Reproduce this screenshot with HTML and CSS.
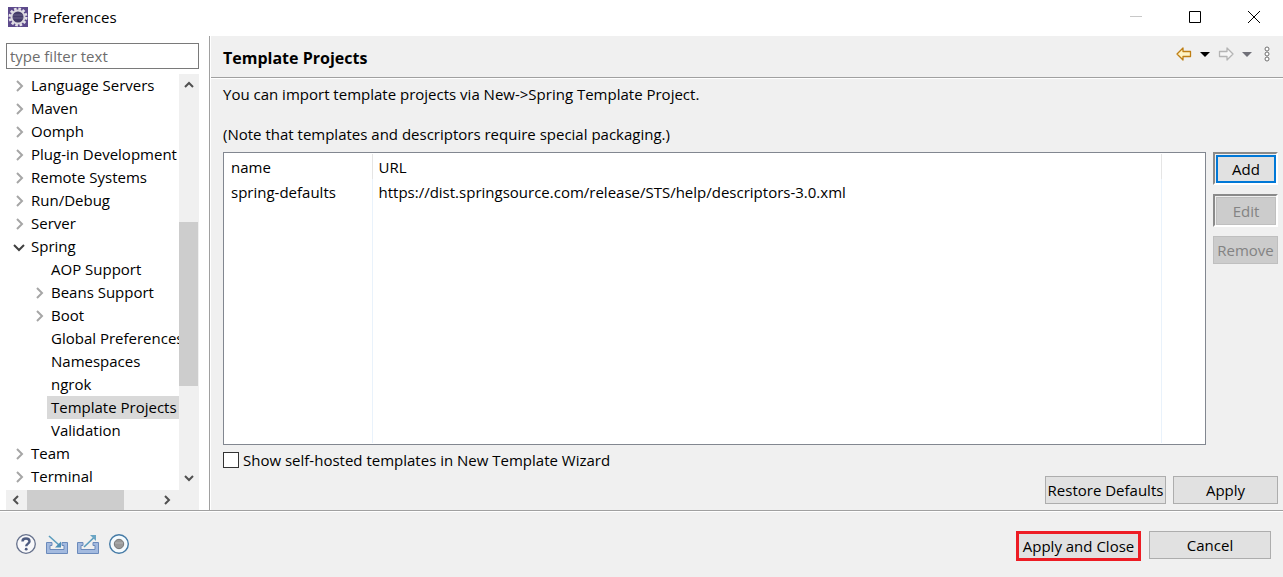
FILE: index.html
```
<!DOCTYPE html>
<html lang="en">
<head>
    <meta charset="UTF-8">
    <title>Preferences</title>
    <link rel="stylesheet" href="styles.css">
</head>
<body>
<svg class="defs" width="0" height="0">
    <symbol id="closed" viewBox="0 0 12 12"><path d="M4 1l5 5-5 5" fill="none" stroke="#a6a6a6" stroke-width="2"/></symbol>
    <symbol id="open" viewBox="0 0 12 12"><path d="M1 4l5 5 5-5" fill="none" stroke="#404040" stroke-width="2"/></symbol>
    <symbol id="arrow-up" viewBox="0 0 12 12"><path d="M2 8l4-4 4 4" fill="none" stroke="#505050" stroke-width="2"/></symbol>
    <symbol id="arrow-down" viewBox="0 0 12 12"><path d="M2 4l4 4 4-4" fill="none" stroke="#505050" stroke-width="2"/></symbol>
    <symbol id="arrow-left" viewBox="0 0 12 12"><path d="M9 2L5 6l4 4" fill="none" stroke="#505050" stroke-width="2"/></symbol>
    <symbol id="arrow-right" viewBox="0 0 12 12"><path d="M3 2l4 4-4 4" fill="none" stroke="#505050" stroke-width="2"/></symbol>
</svg>

<div class="titlebar">
    <svg class="logo" width="20" height="20" viewBox="0 0 20 20">
        <rect width="20" height="20" fill="#5d4a8c"/>
        <circle cx="10" cy="10" r="8" fill="none" stroke="#e4e1e8" stroke-width="3" stroke-dasharray="2.5 1.7"/>
        <circle cx="10" cy="10" r="6.5" fill="#443c68" stroke="#dcd9df" stroke-width="2"/>
        <path d="M5 8h10M5 11h10" stroke="#6a6289"/>
    </svg>
    <h1>Preferences</h1>
    <div class="window-buttons">
        <button type="button" aria-label="Minimize"><svg width="14" height="14"><path d="M1 6.500h12" stroke="#c8c8c8"/></svg></button>
        <button type="button" aria-label="Maximize"><svg width="14" height="14"><path d="M1.500 1.500h11v11h-11z" fill="none" stroke="#000"/></svg></button>
        <button type="button" aria-label="Close"><svg width="14" height="14"><path d="M1 1l12 12M13 1L1 13" stroke="#000"/></svg></button>
    </div>
</div>

<div class="content">
    <div class="sidebar">
        <input class="filter" type="text" placeholder="type filter text" aria-label="type filter text">
        <div class="tree-box">
            <ul class="tree">
                <li><div class="row"><button type="button" class="toggle" aria-label="Expand"><svg><use href="#closed"/></svg></button><span class="label">Language Servers</span></div></li>
                <li><div class="row"><button type="button" class="toggle" aria-label="Expand"><svg><use href="#closed"/></svg></button><span class="label">Maven</span></div></li>
                <li><div class="row"><button type="button" class="toggle" aria-label="Expand"><svg><use href="#closed"/></svg></button><span class="label">Oomph</span></div></li>
                <li><div class="row"><button type="button" class="toggle" aria-label="Expand"><svg><use href="#closed"/></svg></button><span class="label">Plug-in Development</span></div></li>
                <li><div class="row"><button type="button" class="toggle" aria-label="Expand"><svg><use href="#closed"/></svg></button><span class="label">Remote Systems</span></div></li>
                <li><div class="row"><button type="button" class="toggle" aria-label="Expand"><svg><use href="#closed"/></svg></button><span class="label">Run/Debug</span></div></li>
                <li><div class="row"><button type="button" class="toggle" aria-label="Expand"><svg><use href="#closed"/></svg></button><span class="label">Server</span></div></li>
                <li>
                    <div class="row"><button type="button" class="toggle" aria-label="Collapse"><svg><use href="#open"/></svg></button><span class="label">Spring</span></div>
                    <ul>
                        <li><div class="row leaf"><span class="label">AOP Support</span></div></li>
                        <li><div class="row"><button type="button" class="toggle" aria-label="Expand"><svg><use href="#closed"/></svg></button><span class="label">Beans Support</span></div></li>
                        <li><div class="row"><button type="button" class="toggle" aria-label="Expand"><svg><use href="#closed"/></svg></button><span class="label">Boot</span></div></li>
                        <li><div class="row leaf"><span class="label">Global Preferences</span></div></li>
                        <li><div class="row leaf"><span class="label">Namespaces</span></div></li>
                        <li><div class="row leaf"><span class="label">ngrok</span></div></li>
                        <li><div class="row leaf"><span class="label current">Template Projects</span></div></li>
                        <li><div class="row leaf"><span class="label">Validation</span></div></li>
                    </ul>
                </li>
                <li><div class="row"><button type="button" class="toggle" aria-label="Expand"><svg><use href="#closed"/></svg></button><span class="label">Team</span></div></li>
                <li><div class="row"><button type="button" class="toggle" aria-label="Expand"><svg><use href="#closed"/></svg></button><span class="label">Terminal</span></div></li>
            </ul>
            <div class="scroll-v">
                <svg><use href="#arrow-up"/></svg>
                <div class="track"><div class="thumb"></div></div>
                <svg><use href="#arrow-down"/></svg>
            </div>
            <div class="scroll-h">
                <svg><use href="#arrow-left"/></svg>
                <div class="track"><div class="thumb"></div></div>
                <svg><use href="#arrow-right"/></svg>
            </div>
        </div>
    </div>

    <div class="page">
        <div class="page-header">
            <h2>Template Projects</h2>
            <div class="nav">
                <button type="button" aria-label="Back"><svg width="16" height="14" viewBox="0 0 16 14"><path d="M1 7L7 1V4.500h7.500v5H7V13z" fill="#fff3c4" stroke="#bf7f14" stroke-width="1.300" stroke-linejoin="round"/></svg></button>
                <button type="button" aria-label="Back history"><svg width="10" height="5"><path d="M0 0h10L5 5z" fill="#000"/></svg></button>
                <button type="button" aria-label="Forward"><svg width="16" height="14" viewBox="0 0 16 14"><path d="M15 7L9 1V4.500H1.500v5H9V13z" fill="#f6f6f6" stroke="#b4b4b4" stroke-width="1.300" stroke-linejoin="round"/></svg></button>
                <button type="button" aria-label="Forward history"><svg width="10" height="5"><path d="M0 0h10L5 5z" fill="#707078"/></svg></button>
                <button type="button" class="menu" aria-label="Menu"><svg width="6" height="16"><g fill="#fff" stroke="#707070"><circle cx="3" cy="3" r="2"/><circle cx="3" cy="8" r="2"/><circle cx="3" cy="13" r="2"/></g></svg></button>
            </div>
        </div>
        <div class="page-body">
            <p>You can import template projects via New-&gt;Spring Template Project.</p>
            <p>(Note that templates and descriptors require special packaging.)</p>
            <div class="list">
                <div class="table-box">
                    <table>
                        <thead>
                            <tr><th class="col-name">name</th><th>URL</th><th class="col-rest"></th></tr>
                        </thead>
                        <tbody>
                            <tr><td>spring-defaults</td><td>https://dist.springsource.com/release/STS/help/descriptors-3.0.xml</td><td></td></tr>
                            <tr class="fill"><td></td><td></td><td></td></tr>
                        </tbody>
                    </table>
                </div>
                <div class="actions">
                    <div class="sunken"><button type="button" class="btn focus">Add</button></div>
                    <div class="sunken"><button type="button" class="btn" disabled>Edit</button></div>
                    <button type="button" class="btn" disabled>Remove</button>
                </div>
            </div>
            <label class="check"><input type="checkbox">Show self-hosted templates in New Template Wizard</label>
            <div class="page-buttons">
                <button type="button" class="btn restore">Restore Defaults</button>
                <button type="button" class="btn apply">Apply</button>
            </div>
        </div>
    </div>
</div>

<div class="footer">
    <div class="tools">
        <button type="button" aria-label="Help"><svg width="22" height="22" viewBox="0 0 22 22"><circle cx="11" cy="11" r="9.300" fill="#f8f8fa" stroke="#66718c" stroke-width="1.300"/><path d="M7.500 8.500C7.500 4.500 14.500 4.500 14.500 8.500C14.500 10.500 11.200 10.800 11.200 13.300" fill="none" stroke="#4d5b80" stroke-width="2.400"/><circle cx="11.200" cy="16.200" r="1.400" fill="#4d5b80"/></svg></button>
        <button type="button" aria-label="Import"><svg width="22" height="22" viewBox="0 0 22 22"><path d="M6 9.500H.500v11h21v-11H16v3h2v4H4v-4h2z" fill="#a3badf" stroke="#6b8abb"/><path d="M3 3l10 9" stroke="#5a9cbd" stroke-width="1.600"/><path d="M15 8.500v6H9z" fill="#4c8fb6"/></svg></button>
        <button type="button" aria-label="Export"><svg width="22" height="22" viewBox="0 0 22 22"><path d="M6 9.500H.500v11h21v-11H16v3h2v4H4v-4h2z" fill="#a3badf" stroke="#6b8abb"/><path d="M7 14L17.500 4" stroke="#5a9cbd" stroke-width="1.600"/><path d="M13 2h6v6z" fill="#6aa5c4"/></svg></button>
        <button type="button" aria-label="Record"><svg width="22" height="22" viewBox="0 0 22 22"><circle cx="11" cy="11" r="9.300" fill="#f5fbfe" stroke="#447aa5" stroke-width="1.400"/><circle cx="11" cy="11" r="4.700" fill="#999" stroke="#777"/><path d="M7 10h8" stroke="#b5b5b5"/></svg></button>
    </div>
    <button type="button" class="btn primary">Apply and Close</button>
    <button type="button" class="btn cancel">Cancel</button>
</div>
</body>
</html>
```
FILE: styles.css
```
* {
    box-sizing: border-box;
    margin: 0;
    padding: 0;
}
body {
    display: flex;
    flex-direction: column;
    min-height: 100vh;
    background: #f0f0f0;
    color: #000;
    font: 15px/20px "Open Sans", "Noto Sans", sans-serif;
}
button, input {
    font: inherit;
    color: inherit;
}
button {
    border: 0;
    background: none;
}
svg {
    display: block;
}
.defs {
    position: absolute;
}

/* title bar */
.titlebar {
    display: flex;
    align-items: center;
    height: 36px;
    padding: 0 22px 2px 8px;
    background: #fff;
}
.titlebar h1 {
    margin-left: 5px;
    font-size: 15px;
    font-weight: normal;
}
.window-buttons {
    display: flex;
    gap: 45px;
    margin-left: auto;
}

.content {
    display: flex;
    flex: 1;
}

/* tree */
.sidebar {
    display: flex;
    flex-direction: column;
    width: 210px;
    padding: 7px 10px 0 6px;
    background: #fff;
    border-right: 1px solid #a0a0a0;
}
.filter {
    width: 100%;
    height: 26px;
    padding: 0 3px;
    border: 1px solid #7a7a7a;
}
.filter::placeholder {
    color: #6d6d6d;
    opacity: 1;
}
.tree-box {
    display: grid;
    flex: 1;
    grid-template-columns: 1fr 20px;
    grid-template-rows: 1fr 20px;
    margin-top: 5px;
}
.tree {
    overflow: hidden;
}
.tree ul {
    padding-left: 20px;
}
li {
    list-style: none;
}
.row {
    display: flex;
    align-items: center;
    height: 23px;
    padding-left: 7px;
}
.leaf {
    padding-left: 21px;
}
.toggle {
    flex: none;
    width: 14px;
}
.row svg, .scroll-v svg, .scroll-h svg {
    width: 12px;
    height: 12px;
}
.label {
    padding: 0 4px;
    line-height: 23px;
    white-space: nowrap;
}
.current {
    background: #d9d9d9;
}
.scroll-v, .scroll-h {
    display: flex;
    align-items: center;
    background: #f0f0f0;
}
.scroll-v {
    flex-direction: column;
    padding: 5px 1px 6px 0;
}
.scroll-h {
    grid-column: 1 / 3;
    padding: 0 25px 0 3px;
}
.track {
    flex: 1;
}
.thumb {
    background: #cdcdcd;
}
.scroll-v .thumb {
    width: 19px;
    height: 43%;
    margin-top: 131px;
}
.scroll-h .thumb {
    width: 69%;
    height: 20px;
    margin-left: 6px;
}

/* page */
.page {
    display: flex;
    flex: 1;
    flex-direction: column;
    border-left: 1px solid #fff;
}
.page-header {
    display: flex;
    align-items: center;
    justify-content: space-between;
    height: 42px;
    padding: 2px 13px 0 12px;
    border-bottom: 1px solid #a0a0a0;
    box-shadow: 0 1px #fff;
}
.page-header h2 {
    font-size: 16px;
}
.nav {
    display: flex;
    align-items: center;
    gap: 8px;
    padding-bottom: 7px;
}
.menu {
    margin-left: 4px;
}
.page-body {
    display: flex;
    flex: 1;
    flex-direction: column;
    padding: 6px 5px 6px 12px;
}
.page-body p {
    margin-bottom: 20px;
}
.page-body p + p {
    margin-bottom: 8px;
}
.list {
    display: flex;
    flex: 1;
    gap: 7px;
}
.table-box {
    display: flex;
    flex: 1;
    padding: 1px;
    background: #fff;
    border: 1px solid #828790;
}
table {
    width: 100%;
    border-collapse: collapse;
}
th, td {
    height: 25px;
    padding: 0 6px;
    border-right: 1px solid #e9f2fb;
    text-align: left;
    font-weight: normal;
}
th {
    border-right-color: #e5e5e5;
}
th:last-child, td:last-child {
    border-right: 0;
}
.col-name {
    width: 147px;
}
.col-rest {
    width: 43px;
}
.fill td {
    height: auto;
}
.actions {
    display: flex;
    flex-direction: column;
    gap: 9px;
    width: 65px;
}

/* buttons */
.btn {
    height: 28px;
    background: #e1e1e1;
    border: 1px solid #adadad;
}
.btn:disabled {
    background: #ccc;
    border-color: #bfbfbf;
    color: #838383;
}
.focus {
    border: 2px solid #0078d7;
}
.sunken {
    padding: 1px 0 0 1px;
    border: 2px solid;
    border-color: #8a8a8a #fff #fff #8a8a8a;
}
.sunken .btn {
    display: block;
    width: 100%;
}
.check {
    display: flex;
    align-items: center;
    gap: 4px;
    margin-top: 5px;
}
.check input {
    width: 16px;
    height: 16px;
    appearance: none;
    background: #fff;
    border: 1px solid #333;
}
.page-buttons {
    display: flex;
    justify-content: flex-end;
    gap: 7px;
    margin-top: 6px;
}
.restore {
    width: 121px;
}
.apply {
    width: 105px;
}

/* footer */
.footer {
    display: flex;
    align-items: flex-start;
    gap: 8px;
    height: 67px;
    padding: 20px 12px 0 15px;
    border-top: 1px solid #a0a0a0;
    box-shadow: inset 0 1px #fff;
}
.tools {
    display: flex;
    gap: 9px;
    margin: 2px auto 0 0;
}
.primary {
    width: 125px;
    height: 30px;
    border: 3px solid #ed1c24;
}
.cancel {
    width: 122px;
}
```
